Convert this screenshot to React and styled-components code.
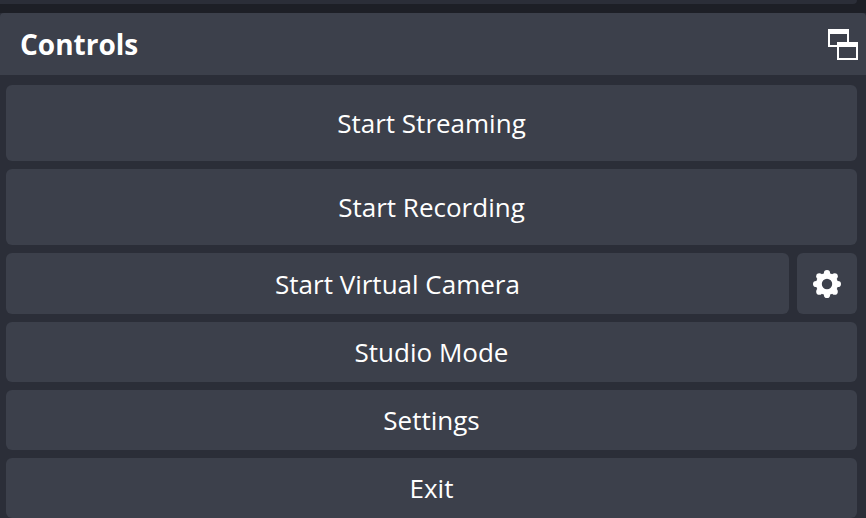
import React from "react";
import styled, { createGlobalStyle } from "styled-components";

const Global = createGlobalStyle`
  html, body { margin: 0; padding: 0; background: #2b2e38; }
  body { font-family: "Open Sans", "Noto Sans", sans-serif; overflow: hidden; }
`;

const Page = styled.div`
  width: 866px;
  height: 518px;
  overflow: hidden;
  display: flex;
  flex-direction: column;
  background: #2b2e38;
`;

const TopArea = styled.div`
  height: 13px;
  background: #1d1f26;
  flex: none;
`;

const TopStrip = styled.div`
  width: 857px;
  height: 4px;
  background: #2b2e38;
  border-radius: 0 0 4px 0;
`;

const TitleBar = styled.div`
  height: 62px;
  flex: none;
  background: #3c404b;
  border-radius: 4px 4px 0 0;
  display: flex;
  align-items: center;
  justify-content: space-between;
  padding: 0 7px 0 20px;
`;

const Title = styled.h1`
  margin: 0;
  font-size: 28px;
  font-weight: 700;
  color: #fff;
`;

const FloatIcon = styled.svg`
  width: 32px;
  height: 34px;
  display: block;
`;

const Controls = styled.div`
  display: flex;
  flex-direction: column;
  gap: 8px;
  padding: 10px 9px 0 6px;
`;

const Row = styled.div`
  display: flex;
  gap: 8px;
`;

const Button = styled.button`
  flex: ${(p) => (p.$square ? "0 0 60px" : "1")};
  height: ${(p) => p.$h}px;
  border: 0;
  padding: 0;
  border-radius: 6px;
  background: #3c404b;
  color: #fff;
  font-family: inherit;
  font-size: 26px;
  display: flex;
  align-items: center;
  justify-content: center;
`;

const TEETH = [0, 45, 90, 135, 180, 225, 270, 315];

const Gear = () => (
  <svg width="30" height="30" viewBox="-15 -15 30 30" fill="#fff">
    <circle r="8.1" fill="none" stroke="#fff" strokeWidth="5.8" />
    {TEETH.map((a) => (
      <circle
        key={a}
        r="3.1"
        cx={10.9 * Math.cos((a * Math.PI) / 180)}
        cy={10.9 * Math.sin((a * Math.PI) / 180)}
      />
    ))}
  </svg>
);

export default function App() {
  return (
    <Page>
      <Global />
      <TopArea>
        <TopStrip />
      </TopArea>
      <TitleBar>
        <Title>Controls</Title>
        <FloatIcon viewBox="0 0 32 34" fill="none" stroke="#fff">
          <rect x="2" y="3" width="19" height="16" strokeWidth="2" />
          <rect x="2" y="3" width="19" height="3" fill="#fff" strokeWidth="2" />
          <rect x="11" y="16" width="19" height="16" fill="#3c404b" strokeWidth="2" />
          <rect x="11" y="16" width="19" height="3" fill="#fff" strokeWidth="2" />
        </FloatIcon>
      </TitleBar>
      <Controls>
        <Row><Button $h={76}>Start Streaming</Button></Row>
        <Row><Button $h={76}>Start Recording</Button></Row>
        <Row>
          <Button $h={61}>Start Virtual Camera</Button>
          <Button $h={61} $square aria-label="Virtual camera settings"><Gear /></Button>
        </Row>
        <Row><Button $h={60}>Studio Mode</Button></Row>
        <Row><Button $h={60}>Settings</Button></Row>
        <Row><Button $h={60}>Exit</Button></Row>
      </Controls>
    </Page>
  );
}
